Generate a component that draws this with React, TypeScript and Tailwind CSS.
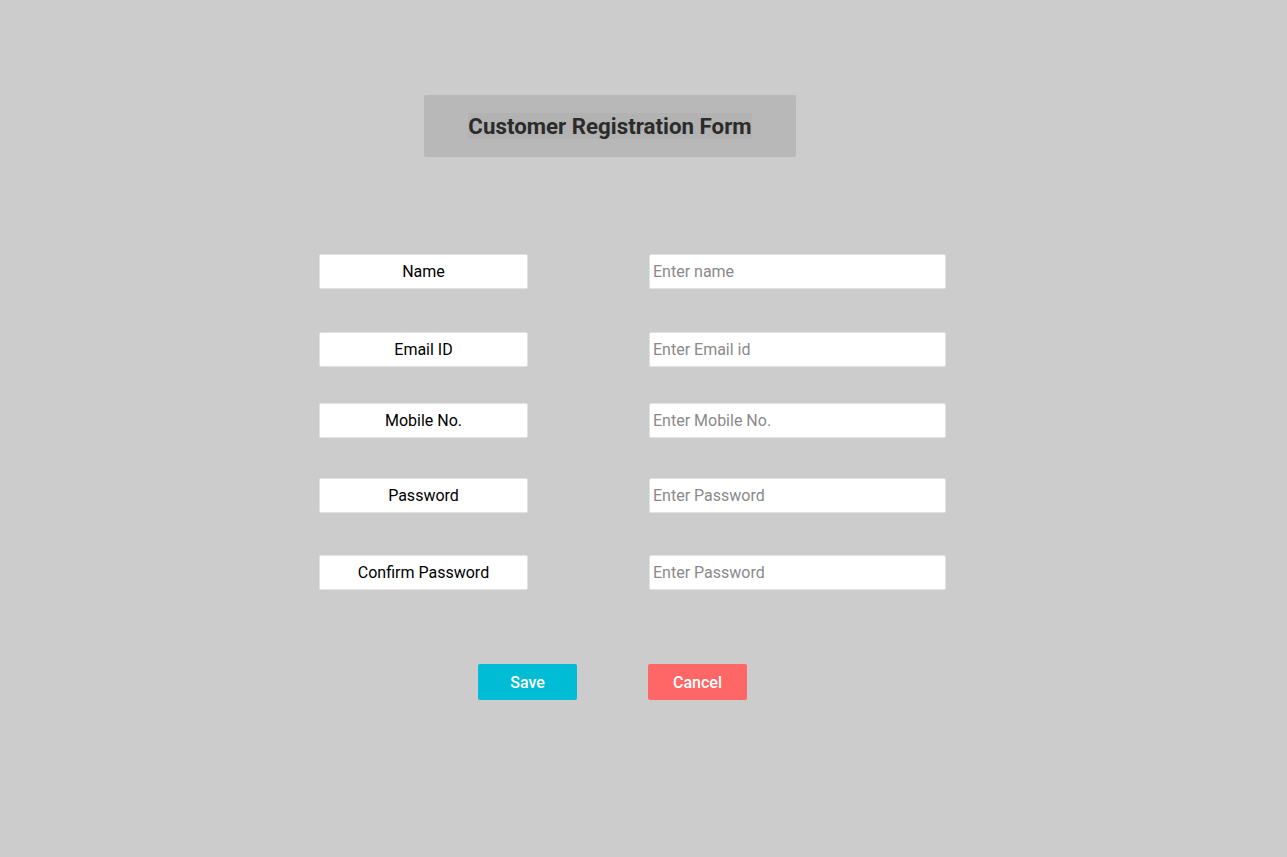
import React from 'react';

const rows = [
  { label: 'Name', placeholder: 'Enter name', type: 'text', mt: 'mt-[97px]' },
  { label: 'Email ID', placeholder: 'Enter Email id', type: 'email', mt: 'mt-[43px]' },
  { label: 'Mobile No.', placeholder: 'Enter Mobile No.', type: 'text', mt: 'mt-[36px]' },
  { label: 'Password', placeholder: 'Enter Password', type: 'password', mt: 'mt-[40px]' },
  { label: 'Confirm Password', placeholder: 'Enter Password', type: 'password', mt: 'mt-[42px]' },
];

export default function App() {
  return (
    <div
      className="min-h-screen w-full bg-[#cccccc] pt-[95px]"
      style={{ fontFamily: 'Roboto, "Liberation Sans", sans-serif' }}
    >
      <div className="ml-[424px] flex h-[62px] w-[372px] items-center justify-center rounded-[2px] bg-[#b8b8b8]">
        <h1 className="bg-[#b2b2b2] text-[22.3px] leading-[26px] font-bold text-[#2b2b2b]">
          Customer Registration Form
        </h1>
      </div>

      {rows.map((r) => (
        <div key={r.label} className={`flex ${r.mt}`}>
          <div className="ml-[319px] flex h-[35px] w-[209px] items-center justify-center rounded-[2px] border border-[#e2e2e2] bg-white text-[16px] text-black">
            {r.label}
          </div>
          <input
            type={r.type}
            placeholder={r.placeholder}
            className="ml-[121px] h-[35px] w-[297px] rounded-[2px] border border-[#e2e2e2] bg-white px-[3px] text-[16px] text-black outline-none placeholder:text-[#8a8a8a]"
          />
        </div>
      ))}

      <div className="mt-[74px] flex">
        <button className="ml-[478px] h-[36px] w-[99px] rounded-[2px] bg-[#00bcd4] pt-[2px] text-[16px] font-medium text-white">
          Save
        </button>
        <button className="ml-[71px] h-[36px] w-[99px] rounded-[2px] bg-[#ff6666] pt-[2px] text-[16px] font-medium text-white">
          Cancel
        </button>
      </div>
    </div>
  );
}
